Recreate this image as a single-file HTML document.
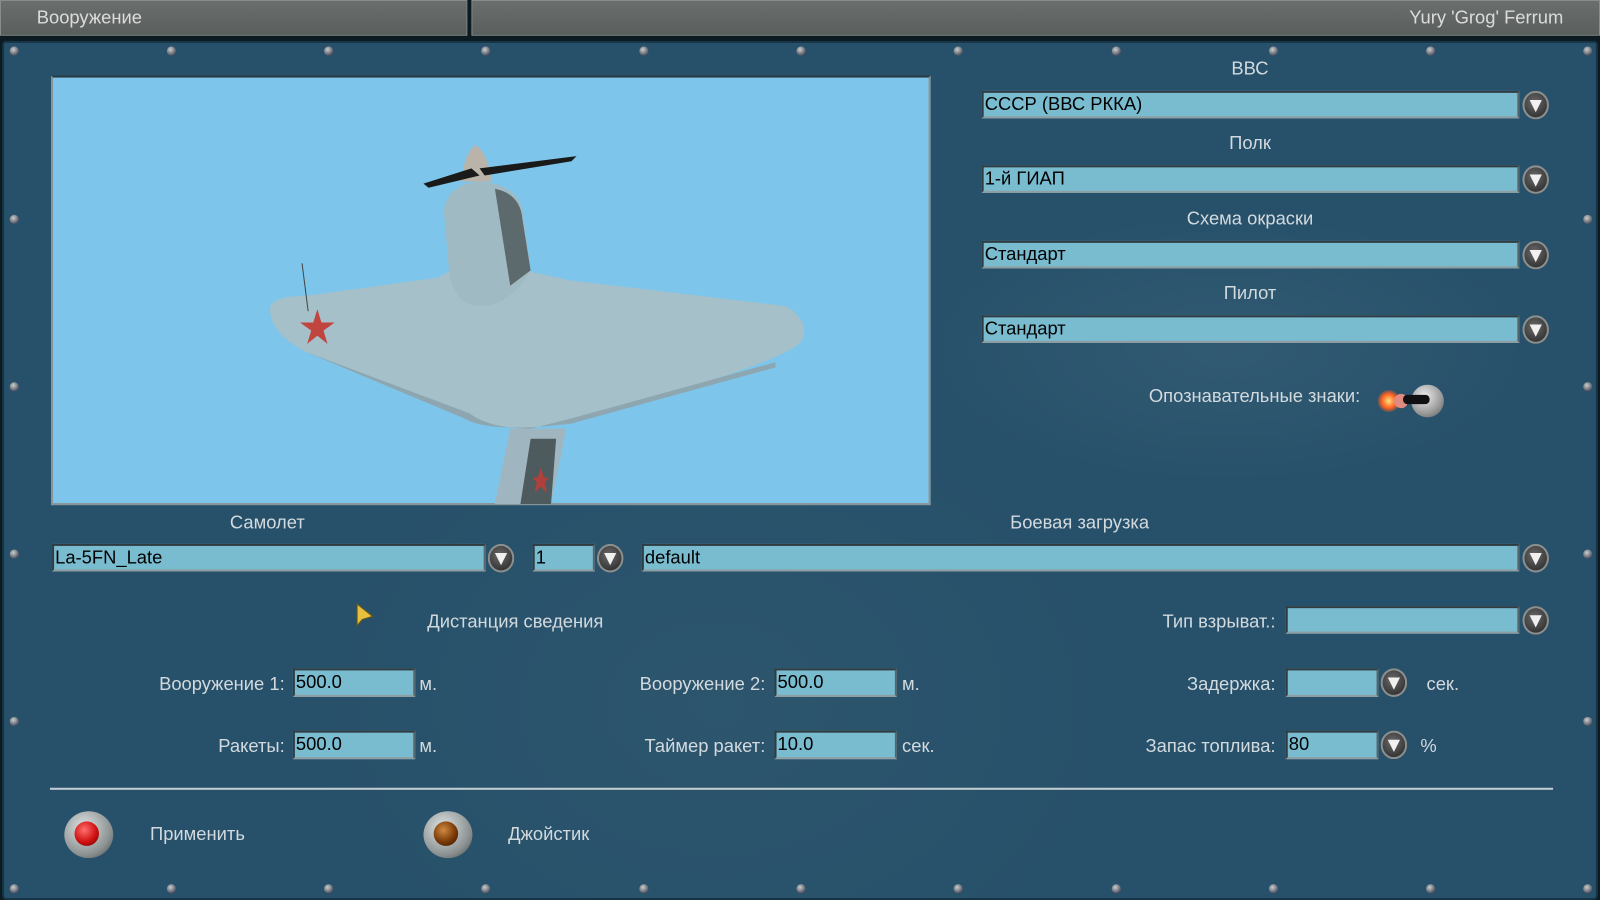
<!DOCTYPE html>
<html><head><meta charset="utf-8"><style>
html,body{margin:0;padding:0;width:1600px;height:900px;overflow:hidden;background:#0c1a22;}
#w{position:absolute;left:0;top:0;width:1568px;height:882px;transform:scale(1.02041,1.02041);transform-origin:0 0;font-family:"Liberation Sans",sans-serif;}
.a{position:absolute;}
.tab{position:absolute;top:0;height:35px;background:linear-gradient(#6a6f6d,#5a5f5d);border:1px solid #888d8b;box-sizing:border-box;}
.panel{position:absolute;left:2px;top:40px;width:1564px;height:842px;background:#27506a;border:2px solid #173446;box-sizing:border-box;border-radius:4px;
background-image:radial-gradient(ellipse at 1200px 300px,rgba(80,120,140,.25),transparent 300px),radial-gradient(ellipse at 700px 650px,rgba(60,100,120,.25),transparent 400px);}
.lbl{position:absolute;color:#d2dade;font-size:18px;line-height:20px;white-space:nowrap;}
.c{transform:translateX(-50%);}
.r{transform:translateX(-100%);}
.f{position:absolute;height:27px;background:#79bbcf;border:2px solid #56666c;border-top-color:#2f3d43;border-left-color:#2f3d43;border-bottom-color:#8e9ea2;box-sizing:border-box;color:#000;font-size:18px;line-height:22px;padding-left:1px;white-space:nowrap;}
.b{position:absolute;width:26px;height:28px;border-radius:50%;background:radial-gradient(circle at 45% 40%,#6a6a6a,#3a3a3a 60%,#222);box-shadow:0 0 0 2px #8a8f8f inset;transform:translate(-50%,-50%);}
.b:after{content:"";position:absolute;left:7px;top:9px;border-left:6px solid transparent;border-right:6px solid transparent;border-top:12px solid #f0f0f0;}
.rv{position:absolute;width:9px;height:9px;border-radius:50%;background:radial-gradient(circle at 40% 35%,#c8d0cc,#556 70%,#222);transform:translate(-50%,-50%);}
</style></head><body><div id="w">
<div class="tab" style="left:0;width:458px;"></div>
<div class="tab" style="left:462px;width:1106px;"></div>
<div class="lbl" style="left:36px;top:7px;color:#dcdcdc;">Вооружение</div>
<div class="lbl r" style="left:1532px;top:7px;color:#dcdcdc;">Yury 'Grog' Ferrum</div>
<div class="panel"></div>
<div class="rv" style="left:14px;top:50px"></div><div class="rv" style="left:168px;top:50px"></div><div class="rv" style="left:322px;top:50px"></div><div class="rv" style="left:476px;top:50px"></div><div class="rv" style="left:631px;top:50px"></div><div class="rv" style="left:785px;top:50px"></div><div class="rv" style="left:939px;top:50px"></div><div class="rv" style="left:1094px;top:50px"></div><div class="rv" style="left:1248px;top:50px"></div><div class="rv" style="left:1402px;top:50px"></div><div class="rv" style="left:1556px;top:50px"></div>
<div class="rv" style="left:14px;top:871px"></div><div class="rv" style="left:168px;top:871px"></div><div class="rv" style="left:322px;top:871px"></div><div class="rv" style="left:476px;top:871px"></div><div class="rv" style="left:631px;top:871px"></div><div class="rv" style="left:785px;top:871px"></div><div class="rv" style="left:939px;top:871px"></div><div class="rv" style="left:1094px;top:871px"></div><div class="rv" style="left:1248px;top:871px"></div><div class="rv" style="left:1402px;top:871px"></div><div class="rv" style="left:1556px;top:871px"></div>
<div class="rv" style="left:14px;top:215px"></div><div class="rv" style="left:14px;top:379px"></div><div class="rv" style="left:14px;top:543px"></div><div class="rv" style="left:14px;top:707px"></div>
<div class="rv" style="left:1556px;top:215px"></div><div class="rv" style="left:1556px;top:379px"></div><div class="rv" style="left:1556px;top:543px"></div><div class="rv" style="left:1556px;top:707px"></div>
<div class="a" style="left:50px;top:74px;width:862px;height:421px;background:#7dc5ea;border:2px solid #8a9498;border-top-color:#2a3a40;box-sizing:border-box;overflow:hidden;"></div>
<svg class="a" style="left:0;top:0" width="912" height="494" viewBox="0 0 912 494">
<path d="M500 420 L485 494 L540 494 L555 420 Z" fill="#9fb6c0"/>
<path d="M520 430 L510 494 L540 494 L545 430 Z" fill="#4d5a5e"/>
<path d="M265 300 Q270 290 300 290 L430 272 Q460 250 500 262 L560 275 L770 300 Q795 315 785 335 Q760 360 560 410 L520 420 Q480 420 460 405 L300 345 Q262 325 265 300 Z" fill="#a6c0ca"/>
<path d="M300 345 L460 405 Q480 420 520 420 L560 410 L760 355 L760 360 L560 415 Q480 425 455 410 Z" fill="#8ea6b0"/>
<path d="M435 205 Q440 180 470 178 Q505 180 512 205 L520 265 Q500 300 470 300 Q445 300 440 265 Z" fill="#a0bac4"/>
<path d="M485 185 Q510 190 512 215 L520 265 L500 280 Z" fill="#5c6a6e"/>
<path d="M452 178 Q455 150 466 142 Q478 150 482 178 Z" fill="#b9b3aa"/>
<path d="M415 180 L462 165 L470 172 L420 184 Z M470 165 L565 153 L560 158 L475 172 Z" fill="#1a1a1a"/>
<path d="M311 303 L315 316 L328 316 L317 324 L321 337 L311 329 L301 337 L305 324 L294 316 L307 316 Z" fill="#c0453f"/>
<path d="M530 458 L533 468 L538 468 L534 473 L536 483 L530 477 L524 483 L526 473 L522 468 L527 468 Z" fill="#b0403b"/>
<line x1="296" y1="258" x2="302" y2="305" stroke="#444" stroke-width="1"/>
</svg>
<div class="lbl c" style="left:1225px;top:57px;">ВВС</div>
<div class="f" style="left:962px;top:89px;width:527px;">СССР (ВВС РККА)</div><div class="b" style="left:1505px;top:103px"></div>
<div class="lbl c" style="left:1225px;top:130px;">Полк</div>
<div class="f" style="left:962px;top:162px;width:527px;">1-й ГИАП</div><div class="b" style="left:1505px;top:176px"></div>
<div class="lbl c" style="left:1225px;top:204px;">Схема окраски</div>
<div class="f" style="left:962px;top:236px;width:527px;">Стандарт</div><div class="b" style="left:1505px;top:250px"></div>
<div class="lbl c" style="left:1225px;top:277px;">Пилот</div>
<div class="f" style="left:962px;top:309px;width:527px;">Стандарт</div><div class="b" style="left:1505px;top:323px"></div>
<div class="lbl r" style="left:1333px;top:378px;">Опознавательные знаки:</div>
<div class="a" style="left:1350px;top:382px;width:22px;height:22px;border-radius:50%;background:radial-gradient(circle,#ffe080,#ff6020 45%,rgba(200,40,0,0) 75%);"></div>
<div class="a" style="left:1366px;top:386px;width:14px;height:14px;border-radius:50%;background:#e08a80;"></div>
<div class="a" style="left:1383px;top:377px;width:32px;height:32px;border-radius:50%;background:radial-gradient(circle at 40% 35%,#eee,#999 60%,#555);"></div>
<div class="a" style="left:1375px;top:387px;width:26px;height:9px;background:#111;border-radius:4px;"></div>
<div class="lbl c" style="left:262px;top:502px;">Самолет</div>
<div class="lbl c" style="left:1058px;top:502px;">Боевая загрузка</div>
<div class="f" style="left:51px;top:533px;width:425px;">La-5FN_Late</div><div class="b" style="left:491px;top:547px"></div>
<div class="f" style="left:522px;top:533px;width:61px;">1</div><div class="b" style="left:598px;top:547px"></div>
<div class="f" style="left:629px;top:533px;width:860px;">default</div><div class="b" style="left:1505px;top:547px"></div>
<svg class="a" style="left:349px;top:591px" width="20" height="26"><path d="M1 1 L1 22 L6 16 L16 13 Z" fill="#e8c040" stroke="#705a10" stroke-width="1"/></svg>
<div class="lbl c" style="left:505px;top:599px;">Дистанция сведения</div>
<div class="lbl r" style="left:1250px;top:599px;">Тип взрыват.:</div>
<div class="f" style="left:1260px;top:594px;width:229px;"></div><div class="b" style="left:1505px;top:608px"></div>
<div class="lbl r" style="left:279px;top:660px;">Вооружение 1:</div>
<div class="f" style="left:287px;top:655px;width:120px;height:28px;">500.0</div>
<div class="lbl" style="left:411px;top:660px;">м.</div>
<div class="lbl r" style="left:750px;top:660px;">Вооружение 2:</div>
<div class="f" style="left:759px;top:655px;width:120px;height:28px;">500.0</div>
<div class="lbl" style="left:884px;top:660px;">м.</div>
<div class="lbl r" style="left:1250px;top:660px;">Задержка:</div>
<div class="f" style="left:1260px;top:655px;width:91px;height:28px;"></div><div class="b" style="left:1366px;top:669px"></div>
<div class="lbl" style="left:1398px;top:660px;">сек.</div>
<div class="lbl r" style="left:279px;top:721px;">Ракеты:</div>
<div class="f" style="left:287px;top:716px;width:120px;height:28px;">500.0</div>
<div class="lbl" style="left:411px;top:721px;">м.</div>
<div class="lbl r" style="left:750px;top:721px;">Таймер ракет:</div>
<div class="f" style="left:759px;top:716px;width:120px;height:28px;">10.0</div>
<div class="lbl" style="left:884px;top:721px;">сек.</div>
<div class="lbl r" style="left:1250px;top:721px;">Запас топлива:</div>
<div class="f" style="left:1260px;top:716px;width:91px;height:28px;">80</div><div class="b" style="left:1366px;top:730px"></div>
<div class="lbl" style="left:1392px;top:721px;">%</div>
<div class="a" style="left:49px;top:772px;width:1473px;height:2px;background:#c2ced2;"></div>
<div class="a" style="left:63px;top:795px;width:48px;height:46px;border-radius:50%;background:radial-gradient(circle at 40% 35%,#e0e4e4,#8a9090 65%,#3a4040);"></div>
<div class="a" style="left:73px;top:805px;width:24px;height:24px;border-radius:50%;background:radial-gradient(circle at 40% 35%,#ff7070,#d01010 55%,#600);"></div>
<div class="lbl" style="left:147px;top:807px;">Применить</div>
<div class="a" style="left:415px;top:795px;width:48px;height:46px;border-radius:50%;background:radial-gradient(circle at 40% 35%,#e0e4e4,#8a9090 65%,#3a4040);"></div>
<div class="a" style="left:425px;top:805px;width:24px;height:24px;border-radius:50%;background:radial-gradient(circle at 40% 35%,#d08a40,#7a3a08 55%,#301000);"></div>
<div class="lbl" style="left:498px;top:807px;">Джойстик</div>
</div></body></html>
